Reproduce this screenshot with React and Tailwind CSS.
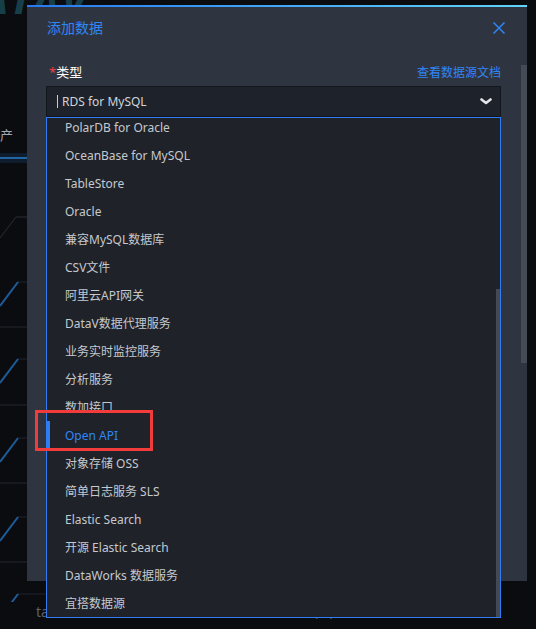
import { useState } from "react";

const options = [
  "PolarDB for Oracle",
  "OceanBase for MySQL",
  "TableStore",
  "Oracle",
  "兼容MySQL数据库",
  "CSV文件",
  "阿里云API网关",
  "DataV数据代理服务",
  "业务实时监控服务",
  "分析服务",
  "数加接口",
  "Open API",
  "对象存储 OSS",
  "简单日志服务 SLS",
  "Elastic Search",
  "开源 Elastic Search",
  "DataWorks 数据服务",
  "宜搭数据源",
];

function BackgroundPage() {
  // the page behind the dialog, only its edges show
  return (
    <div className="flex h-full flex-col">
      <div className="h-[14px] overflow-hidden">
        <div className="-ml-[50px] -mt-[21px] whitespace-nowrap text-[44px] font-bold italic leading-none tracking-[2px] text-[#173f4a]">
          DATAV
        </div>
      </div>
      <div className="-ml-[13px] mt-[112px] text-[13px] leading-[18px] text-[#a3a8b0]">资产</div>
      <svg width="46" height="458" viewBox="0 144 46 458">
        <rect x="0" y="153" width="46" height="10" fill="#0e2235" opacity="0.8" />
        <line x1="0" y1="158" x2="46" y2="158" stroke="#2466a3" strokeWidth="2" />
        <polyline points="0,238 16,217 46,217" fill="none" stroke="#2a2e35" strokeWidth="1" />
        {[282, 359, 438, 517, 594].map((y) => (
          <g key={y}>
            <line x1="18" y1={y} x2="46" y2={y} stroke="#1f232a" strokeWidth="1" />
            <line x1="0" y1={y + 24} x2="18" y2={y} stroke="#1d5c9a" strokeWidth="2" />
          </g>
        ))}
        {[327, 405, 483, 562].map((y) => (
          <line key={y} x1="0" y1={y} x2="46" y2={y} stroke="#23262d" strokeWidth="1" />
        ))}
      </svg>
      <div className="flex text-[14px] leading-[20px] text-[#5d6168]">
        <span className="ml-[36px] w-[212px]">taizhou</span>
        <span>2020/7/5 下午1:45:10</span>
      </div>
    </div>
  );
}

export default function App() {
  const [selected] = useState("Open API");

  return (
    <div className="relative h-[629px] w-[536px] overflow-hidden bg-[#0b0c10] font-['Noto_Sans','Noto_Sans_CJK_SC',sans-serif]">
      <BackgroundPage />

      {/* dialog */}
      <div className="absolute left-[27px] top-[5px] flex h-[576px] w-[500px] flex-col bg-[#2f3540]">
        <div className="h-[2px] bg-gradient-to-r from-[#2a78f2] to-[#62d4f8]" />
        <div className="flex flex-1">
          <div className="flex-1">
            <div className="flex h-[42px] items-center justify-between pl-[20px] pr-[16px]">
              <span className="text-[14px] leading-[20px] text-[#2f86f6]">添加数据</span>
              <svg width="12" height="12" viewBox="0 0 12 12">
                <path d="M0.5 0.5 L11.5 11.5 M11.5 0.5 L0.5 11.5" stroke="#2f86f6" strokeWidth="1.5" />
              </svg>
            </div>

            <div className="pl-[19px] pr-[20px]">
              <div className="mt-[15px] flex h-[18px] items-center justify-between">
                <span className="pl-[3px] text-[13px] text-white">
                  <span className="text-[#f04040]">*</span>类型
                </span>
                <span className="text-[12px] text-[#2f86f6]">查看数据源文档</span>
              </div>
              <div className="mt-[4px] flex h-[31px] items-center border border-[#13161b] bg-[#1e222a] pl-[10px] pr-[8px]">
                <span className="h-[13px] w-px bg-[#c8ccd2]" />
                <span className="ml-[4px] flex-1 text-[12px] text-[#d0d4da]">RDS for MySQL</span>
                <svg width="12" height="7" viewBox="0 0 12 7">
                  <polyline
                    points="1.5,1.5 6,5 10.5,1.5"
                    fill="none"
                    stroke="#e2e6ec"
                    strokeWidth="2.6"
                    strokeLinecap="round"
                    strokeLinejoin="round"
                  />
                </svg>
              </div>
            </div>
          </div>
          {/* dialog scrollbar */}
          <div className="w-[6px] pt-[58px]">
            <div className="h-[298px] bg-[#454b55]" />
          </div>
        </div>
      </div>

      {/* open dropdown */}
      <div className="absolute left-[46px] top-[117px] flex h-[501px] w-[455px] overflow-hidden border border-[#2f7cf5] bg-[#1f2228]">
        <ul className="-mt-[5px] flex-1">
          {options.map((opt) => (
            <li
              key={opt}
              className={
                opt === selected
                  ? "relative flex h-[28px] items-center pl-[18px] pt-px text-[12px] text-[#2f86f6]"
                  : "flex h-[28px] items-center pl-[18px] pt-px text-[12px] text-[#c5c9cf]"
              }
            >
              {opt === selected && <span className="absolute left-0 top-0 h-full w-[3px] bg-[#2f7cf5]" />}
              {opt}
            </li>
          ))}
        </ul>
        <div className="w-[4px] pt-[171px]">
          <div className="h-full bg-[#454a52]" />
        </div>
      </div>

      {/* annotation */}
      <div className="absolute left-[35px] top-[410px] h-[41px] w-[118px] border-[3px] border-[#f23c3c]" />
    </div>
  );
}
